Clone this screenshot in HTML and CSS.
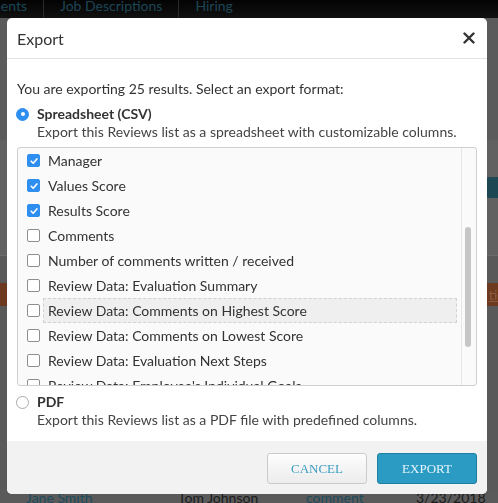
FILE: index.html
```html
<!DOCTYPE html>
<html>
<head>
    <title>Export</title>
    <link rel="stylesheet" href="styles.css">
</head>
<body>
    <div class="page">
        <div class="nav">
            <span class="nav-item first">nents</span>
            <span class="nav-item">Job Descriptions</span>
            <span class="nav-item last">Hiring</span>
        </div>
        <div class="band band-top"></div>
        <div class="band band-light"><span class="round-btn"></span></div>
        <div class="band band-mid"></div>
        <div class="band band-brown"><span class="brown-text">tic</span></div>
        <div class="band band-low"></div>
        <div class="row-bottom">
            <span class="cell-name link">Jane Smith</span>
            <span class="cell-mgr">Tom Johnson</span>
            <span class="cell-type link">comment</span>
            <span class="cell-date">3/23/2018</span>
        </div>
    </div>

    <div class="overlay">
        <div class="modal">
            <div class="modal-header">
                <span class="modal-title">Export</span>
                <svg class="close" width="12" height="12" viewBox="0 0 12 12">
                    <path d="M1.5 1.5 L10.5 10.5 M10.5 1.5 L1.5 10.5" stroke="#333" stroke-width="2.4" stroke-linecap="round"/>
                </svg>
            </div>
            <div class="modal-body">
                <p class="intro">You are exporting 25 results. Select an export format:</p>

                <div class="option">
                    <span class="radio on"></span>
                    <span class="option-name">Spreadsheet (CSV)</span>
                </div>
                <p class="option-desc">Export this Reviews list as a spreadsheet with customizable columns.</p>

                <div class="columns-box">
                    <div class="columns-list">
                        <div class="col-row"><span class="cb on"><svg width="10" height="10" viewBox="0 0 10 10"><path d="M2.2 5.2 L4.2 7.2 L7.9 2.9" fill="none" stroke="#fff" stroke-width="1.6" stroke-linecap="round" stroke-linejoin="round"/></svg></span><span class="col-label">Manager</span></div>
                        <div class="col-row"><span class="cb on"><svg width="10" height="10" viewBox="0 0 10 10"><path d="M2.2 5.2 L4.2 7.2 L7.9 2.9" fill="none" stroke="#fff" stroke-width="1.6" stroke-linecap="round" stroke-linejoin="round"/></svg></span><span class="col-label">Values Score</span></div>
                        <div class="col-row"><span class="cb on"><svg width="10" height="10" viewBox="0 0 10 10"><path d="M2.2 5.2 L4.2 7.2 L7.9 2.9" fill="none" stroke="#fff" stroke-width="1.6" stroke-linecap="round" stroke-linejoin="round"/></svg></span><span class="col-label">Results Score</span></div>
                        <div class="col-row"><span class="cb"></span><span class="col-label">Comments</span></div>
                        <div class="col-row"><span class="cb"></span><span class="col-label">Number of comments written / received</span></div>
                        <div class="col-row"><span class="cb"></span><span class="col-label">Review Data: Evaluation Summary</span></div>
                        <div class="col-row"><span class="cb"></span><span class="col-label hover">Review Data: Comments on Highest Score</span></div>
                        <div class="col-row"><span class="cb"></span><span class="col-label">Review Data: Comments on Lowest Score</span></div>
                        <div class="col-row"><span class="cb"></span><span class="col-label">Review Data: Evaluation Next Steps</span></div>
                        <div class="col-row"><span class="cb"></span><span class="col-label">Review Data: Employee's Individual Goals</span></div>
                    </div>
                    <div class="scroll-track"><div class="scroll-thumb"></div></div>
                </div>

                <div class="option option-pdf">
                    <span class="radio"></span>
                    <span class="option-name">PDF</span>
                </div>
                <p class="option-desc">Export this Reviews list as a PDF file with predefined columns.</p>
            </div>
            <div class="modal-footer">
                <button class="btn btn-cancel">Cancel</button>
                <button class="btn btn-export">Export</button>
            </div>
        </div>
    </div>
</body>
</html>
```

FILE: styles.css
```css
body {
    margin: 0;
    font-family: 'Lato', 'Open Sans', sans-serif;
    background-color: #5a5a5a;
    overflow: hidden;
}

/* page behind the dialog, already dimmed */
.page {
    width: 498px;
    height: 503px;
}

.nav {
    height: 18px;
    background: linear-gradient(#030303, #111);
    display: flex;
    align-items: flex-start;
    font-size: 14px;
    line-height: 12px;
    color: #1d4656;
    overflow: hidden;
}

.nav-item {
    padding: 0 16px;
    height: 18px;
    border-right: 1px solid #2a2a2a;
}

.nav-item.first {
    margin-left: -7px;
    padding-left: 0;
}

.nav-item.last {
    border-right: none;
}

.band {
    position: relative;
}

.band-top {
    height: 122px;
    background-color: #5b5b5b;
}

.band-light {
    height: 115px;
    background-color: #616161;
    display: flex;
    justify-content: flex-end;
    align-items: flex-start;
}

.round-btn {
    margin-top: 37px;
    width: 24px;
    height: 21px;
    margin-right: -8px;
    border-radius: 8px;
    background-color: #1c4753;
}

.band-mid {
    height: 27px;
    border-top: 1px solid #6c6c6c;
    background-color: #595959;
}

.band-brown {
    height: 23px;
    background-color: #6d3a20;
    display: flex;
    justify-content: flex-end;
    align-items: center;
    font-size: 14px;
    color: #8c5a3e;
}

.brown-text {
    margin-right: -6px;
    text-decoration: underline;
}

.band-low {
    height: 184px;
    background-color: #595959;
}

.row-bottom {
    display: flex;
    height: 13px;
    background-color: #5a5a5a;
    font-size: 14px;
    line-height: 16px;
    color: #1b1b1b;
    overflow: hidden;
}

.row-bottom .link {
    color: #1d4a5c;
}

.cell-name { margin-left: 26px; width: 152px; }
.cell-mgr { width: 128px; }
.cell-type { width: 110px; }

/* dialog */
.overlay {
    position: fixed;
    top: 0;
    left: 0;
    right: 0;
    bottom: 0;
    padding: 18px 0 0 7px;
}

.modal {
    width: 480px;
    height: 476px;
    background-color: #fff;
    border-radius: 5px;
    display: flex;
    flex-direction: column;
    overflow: hidden;
    color: #333;
}

.modal-header {
    height: 40px;
    border-bottom: 1px solid #e3e3e3;
    display: flex;
    align-items: center;
    justify-content: space-between;
    padding: 0 12px 0 10px;
}

.modal-title {
    font-size: 16px;
}

.modal-body {
    padding: 21px 10px 12px;
    font-size: 14px;
    line-height: 18px;
}

.intro {
    margin: 0;
}

.option {
    display: flex;
    align-items: center;
    margin-top: 7px;
    height: 18px;
}

.option-pdf {
    margin-top: 7px;
}

.radio {
    width: 11px;
    height: 11px;
    margin-left: -1px;
    margin-right: 8px;
    border: 1px solid #aaa;
    border-radius: 50%;
    background-color: #fff;
    display: flex;
    align-items: center;
    justify-content: center;
}

.radio.on {
    background-color: #2e8ff0;
    border-color: #2e8ff0;
}

.radio.on::after {
    content: '';
    width: 4px;
    height: 4px;
    border-radius: 50%;
    background-color: #fff;
}

.option-name {
    font-weight: bold;
}

.option-desc {
    margin: 0;
    padding-left: 20px;
    color: #444;
}

.columns-box {
    margin-top: 6px;
    height: 237px;
    border: 1px solid #cfcfcf;
    border-radius: 3px;
    background-color: #fafafa;
    display: flex;
    overflow: hidden;
}

.columns-list {
    flex: 1;
    padding-right: 4px;
    overflow: hidden;
}

.col-row {
    height: 25px;
    display: flex;
    align-items: center;
    flex-shrink: 0;
}

.cb {
    width: 11px;
    height: 11px;
    margin-left: 9px;
    margin-right: 3px;
    border: 1px solid #8e8e8e;
    border-radius: 2px;
    background-color: #fff;
    display: flex;
    align-items: center;
    justify-content: center;
    flex-shrink: 0;
}

.cb.on {
    background-color: #2e8ff0;
    border-color: #2e8ff0;
}

.col-label {
    flex: 1;
    height: 23px;
    line-height: 23px;
    padding-left: 4px;
    border: 1px solid transparent;
    white-space: nowrap;
}

.col-label.hover {
    background-color: #efefef;
    border: 1px dashed #d2d2d2;
}

.scroll-track {
    width: 14px;
    border-left: 1px solid #e6e6e6;
}

.scroll-thumb {
    width: 6px;
    height: 120px;
    margin: 79px 0 0 3px;
    border-radius: 3px;
    background-color: #c6c6c6;
}

.modal-footer {
    flex: 1;
    background-color: #f2f2f2;
    display: flex;
    justify-content: flex-end;
    gap: 10px;
    padding: 12px 10px 10px;
}

.btn {
    width: 100px;
    height: 31px;
    border-radius: 3px;
    font-family: 'Liberation Serif', serif;
    font-size: 13px;
    text-transform: uppercase;
    cursor: pointer;
}

.btn-cancel {
    background: linear-gradient(#fdfdfd, #ececec);
    border: 1px solid #cbcbcb;
    color: #3b9dc2;
}

.btn-export {
    background-color: #2b9bc3;
    border: 1px solid #1f7fa3;
    color: #e6f5fb;
}
```
